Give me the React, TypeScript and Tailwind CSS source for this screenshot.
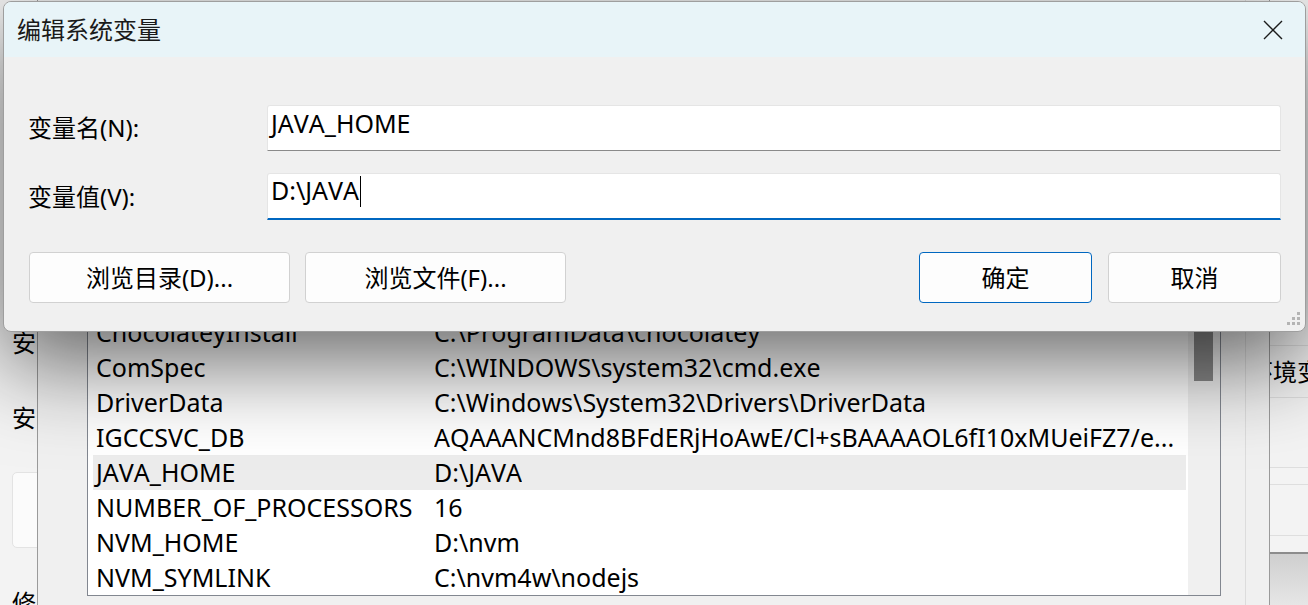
const rows: [string, string][] = [
  ["ChocolateyLastPathUpdate", "134052839469621845"],
  ["ChocolateyInstall", "C:\\ProgramData\\chocolatey"],
  ["ComSpec", "C:\\WINDOWS\\system32\\cmd.exe"],
  ["DriverData", "C:\\Windows\\System32\\Drivers\\DriverData"],
  ["IGCCSVC_DB", "AQAAANCMnd8BFdERjHoAwE/Cl+sBAAAAOL6fI10xMUeiFZ7/e..."],
  ["JAVA_HOME", "D:\\JAVA"],
  ["NUMBER_OF_PROCESSORS", "16"],
  ["NVM_HOME", "D:\\nvm"],
  ["NVM_SYMLINK", "C:\\nvm4w\\nodejs"],
];

function CloseIcon() {
  return (
    <svg width="20" height="20" viewBox="0 0 20 20">
      <path d="M1 1 L19 19 M19 1 L1 19" stroke="#1b1b1b" strokeWidth="1.4" fill="none" />
    </svg>
  );
}

function Grip() {
  return (
    <svg width="18" height="18" viewBox="0 0 18 18" fill="#b4b4b4">
      <rect x="12" y="2" width="3" height="3" />
      <rect x="7" y="7" width="3" height="3" />
      <rect x="12" y="7" width="3" height="3" />
      <rect x="2" y="12" width="3" height="3" />
      <rect x="7" y="12" width="3" height="3" />
      <rect x="12" y="12" width="3" height="3" />
    </svg>
  );
}

export default function App() {
  return (
    <div className="relative w-[1308px] h-[605px] overflow-hidden bg-[#f0f0f0] text-black [font-kerning:none] font-['Noto_Sans','Noto_Sans_CJK_SC',sans-serif]">
      {/* windows behind the dialog */}
      <div className="flex h-[605px]">
        {/* settings window on the left */}
        <div className="w-[37px] overflow-hidden bg-[#f3f3f3] flex flex-col pl-[12px] pt-[325px] text-[24px] leading-[35px]">
          <div>安</div>
          <div className="mt-[40px]">安</div>
          <div className="mt-[37px] h-[76px] w-[60px] shrink-0 rounded-[5px] border border-[#e3e3e3] bg-[#fbfbfb]" />
          <div className="mt-[37px]">修</div>
        </div>

        {/* environment variables window */}
        <div className="w-[1233px] flex border-l border-r border-[#9a9a9a] bg-[#f0f0f0]">
          <div className="flex flex-col justify-end pl-[49px] pb-[9px]">
            <div className="w-[1134px] flex border border-[#828790] bg-white">
              <div className="flex-1 pl-[5px]">
                {rows.map(([name, value]) => (
                  <div
                    key={name}
                    className={`flex h-[35px] items-center pl-[3px] text-[25px] whitespace-nowrap ${
                      name === "JAVA_HOME" ? "bg-[#ececec]" : ""
                    }`}
                  >
                    <div className="w-[338px] shrink-0">{name}</div>
                    <div className="overflow-hidden">{value}</div>
                  </div>
                ))}
              </div>
              <div className="ml-[2px] w-[32px] bg-[#f0f0f0] pl-[6px]">
                <div className="mt-[35px] h-[66px] w-[19px] bg-[#8a8a8a]" />
              </div>
            </div>
          </div>
          <div className="ml-[24px] w-px bg-[#dcdcdc]" />
        </div>

        {/* window on the right */}
        <div className="flex-1 overflow-hidden bg-[#f3f3f3] flex flex-col">
          <div className="mt-[345px] h-[53px] border-y border-[#dedede] flex items-center">
            <span className="-ml-[21px] text-[24px] leading-none whitespace-nowrap">环境变量</span>
          </div>
          <div className="mt-[69px] h-[18px] border-y border-[#dedede]" />
          <div className="mt-[50px] h-[19px] border-t border-[#dedede] border-b-2 border-b-[#8c8c8c]" />
          <div className="flex-1 bg-gradient-to-b from-[#cfcfcf] to-[#e6e6e6]" />
        </div>
      </div>

      {/* edit dialog */}
      <div className="absolute left-[3px] top-[1px] w-[1303px] h-[331px] overflow-hidden rounded-[8px] border border-[#9e9e9e] bg-[#f0f0f0] shadow-[0_30px_90px_rgba(0,0,0,0.6)]">
        <div className="h-[55px] flex items-center justify-between bg-[#e8f4f8] pl-[13px] pr-[22px]">
          <span className="text-[24px] leading-none text-[#1a1a1a]">编辑系统变量</span>
          <CloseIcon />
        </div>

        <div className="px-[24px] pt-[48px] text-[24px]">
          <div className="flex h-[46px] items-center">
            <div className="w-[239px] shrink-0">变量名(N):</div>
            <div className="flex-1 h-full flex items-center pl-[3px] pb-[8px] text-[25px] rounded-t-[3px] bg-white border border-[#e5e5e5] border-b-[#8a8a8a]">
              JAVA_HOME
            </div>
          </div>

          <div className="mt-[22px] flex h-[47px] items-center">
            <div className="w-[239px] shrink-0">变量值(V):</div>
            <div className="flex-1 h-full flex items-center pl-[3px] pb-[10px] text-[25px] rounded-t-[3px] bg-white border border-[#e5e5e5] border-b-2 border-b-[#0067c0]">
              D:\JAVA
              <span className="ml-[1px] inline-block h-[31px] w-px bg-black" />
            </div>
          </div>

          <div className="mt-[32px] flex justify-between">
            <div className="flex gap-[15px] pl-[1px]">
              <button className="h-[51px] w-[261px] rounded-[4px] border border-[#d1d1d1] bg-[#fdfdfd]">
                浏览目录(D)...
              </button>
              <button className="h-[51px] w-[261px] rounded-[4px] border border-[#d1d1d1] bg-[#fdfdfd]">
                浏览文件(F)...
              </button>
            </div>
            <div className="flex gap-[16px]">
              <button className="h-[51px] w-[173px] rounded-[4px] border border-[#0067c0] bg-[#fdfdfd]">
                确定
              </button>
              <button className="h-[51px] w-[173px] rounded-[4px] border border-[#d1d1d1] bg-[#fdfdfd]">
                取消
              </button>
            </div>
          </div>
        </div>

        <div className="absolute right-[2px] bottom-[3px]">
          <Grip />
        </div>
      </div>
    </div>
  );
}
